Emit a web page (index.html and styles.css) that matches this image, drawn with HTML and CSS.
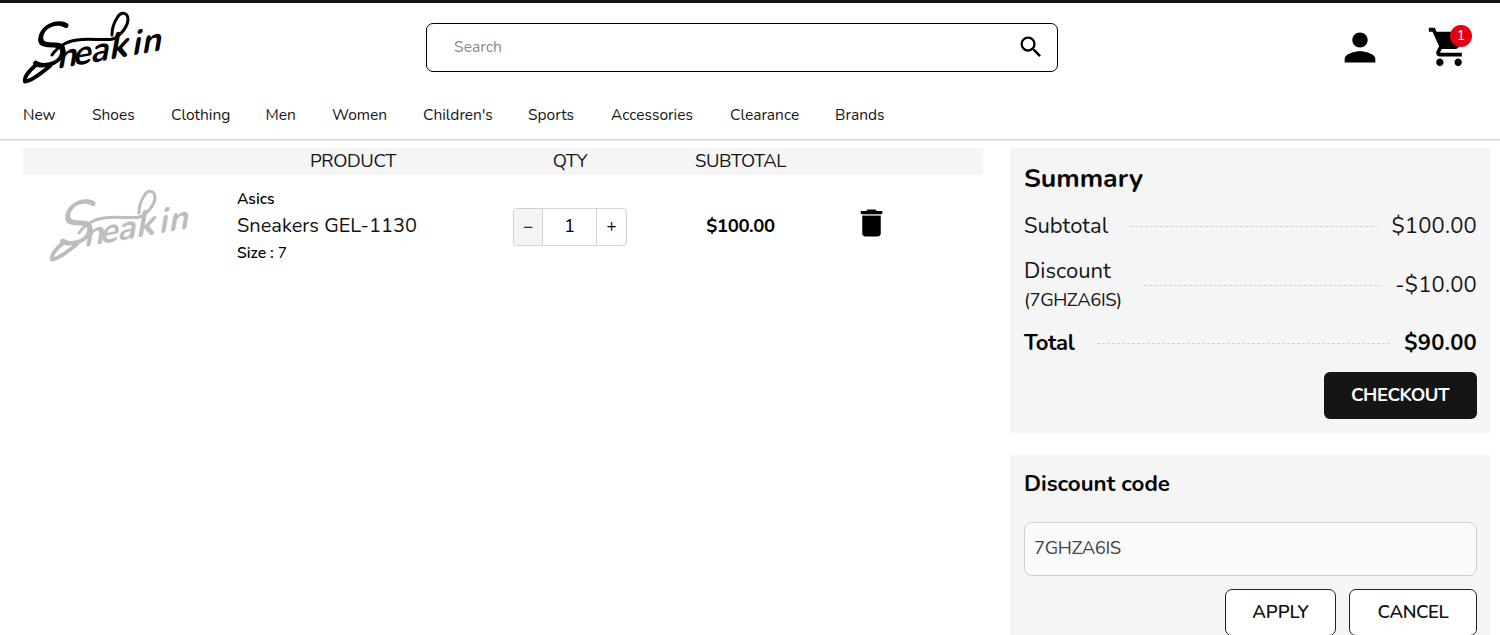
FILE: index.html
```html
<!DOCTYPE html>
<html lang="en">
<head>
<meta charset="utf-8">
<title>Sneakin – Cart</title>
<link rel="stylesheet" href="styles.css">
</head>
<body>
<svg class="defs" width="0" height="0" aria-hidden="true">
  <symbol id="wordmark" viewBox="0 0 144 76" overflow="visible">
    <g fill="none" stroke="currentColor" stroke-linecap="round" stroke-linejoin="round">
      <path stroke-width="3" d="M30 45C37 35 46 30 60 29.500C70 29 80 30 88 29.500C95 29 105 19 106 10C106 2 99 1 95 8C91 14 90 19 90 25"/>
      <path stroke-width="4" d="M28 56C22 61 9 71 3 71.500C2 67 8 60 14 55"/>
    </g>
    <g class="wordmark-letters" fill="currentColor" transform="translate(28 60) rotate(-10) skewX(-20)">
      <text><tspan class="wm-s" x="-22" y="-4">S</tspan><tspan class="wm-low" x="7 23 41" y="0">nea</tspan><tspan class="wm-k" x="60" y="0">k</tspan><tspan class="wm-low" x="83 93" y="0">in</tspan></text>
    </g>
  </symbol>
</svg>

<header class="header">
  <div class="topbar">
    <a class="logo"><svg width="144" height="76"><use href="#wordmark"/></svg></a>
    <div class="search">
      <span class="search-hint">Search</span>
      <svg width="28" height="28" viewBox="0 0 24 24"><path d="M15.500 14h-.79l-.28-.27A6.470 6.470 0 0 0 16 9.500 6.500 6.500 0 1 0 9.500 16c1.610 0 3.090-.59 4.230-1.570l.27.28v.79l5 4.990L20.490 19l-4.990-5zm-6 0C7.010 14 5 11.990 5 9.500S7.010 5 9.500 5 14 7.010 14 9.500 11.990 14 9.500 14z"/></svg>
    </div>
    <div class="account">
      <svg width="46" height="45" viewBox="0 0 24 24" preserveAspectRatio="none"><path d="M12 12c2.210 0 4-1.790 4-4s-1.790-4-4-4-4 1.790-4 4 1.790 4 4 4zm0 2c-2.670 0-8 1.340-8 4v2h16v-2c0-2.660-5.330-4-8-4z"/></svg>
      <div class="cart">
        <svg width="44" height="46" viewBox="0 0 24 24" preserveAspectRatio="none"><path d="M7 18c-1.100 0-1.990.9-1.990 2S5.900 22 7 22s2-.9 2-2-.9-2-2-2zM1 2v2h2l3.600 7.590-1.350 2.450c-.16.28-.25.61-.25.96 0 1.100.9 2 2 2h12v-2H7.420c-.14 0-.25-.11-.25-.25l.03-.12.9-1.630h7.450c.75 0 1.410-.41 1.750-1.030l3.580-6.490A1 1 0 0 0 20 4H5.210l-.94-2H1zm16 16c-1.100 0-1.990.9-1.990 2s.89 2 1.990 2 2-.9 2-2-.9-2-2-2z"/></svg>
        <span class="badge">1</span>
      </div>
    </div>
  </div>
  <nav class="nav">
    <a>New</a><a>Shoes</a><a>Clothing</a><a>Men</a><a>Women</a><a>Children's</a><a>Sports</a><a>Accessories</a><a>Clearance</a><a>Brands</a>
  </nav>
</header>

<main class="main">
  <section class="items">
    <div class="row head"><span></span><span>PRODUCT</span><span>QTY</span><span>SUBTOTAL</span></div>
    <div class="row item">
      <div class="thumb"><svg width="146" height="76"><use href="#wordmark"/></svg></div>
      <div class="product">
        <div class="brand">Asics</div>
        <div class="name">Sneakers GEL-1130</div>
        <div class="size"><b>Size :</b> 7</div>
      </div>
      <div class="cell"><div class="stepper"><span class="minus">−</span><span class="count">1</span><span>+</span></div></div>
      <div class="cell price">$100.00</div>
      <div class="cell trash"><svg width="37" height="36" viewBox="0 0 24 24" preserveAspectRatio="none"><path d="M6 19c0 1.100.9 2 2 2h8c1.100 0 2-.9 2-2V7H6v12zM19 4h-3.500l-1-1h-5l-1 1H5v2h14V4z"/><path fill="#aaa" d="M6 6h12v1H6z"/></svg></div>
    </div>
  </section>

  <aside class="side">
    <section class="card summary">
      <h2>Summary</h2>
      <div class="line"><span class="label">Subtotal</span><i></i><span class="amount">$100.00</span></div>
      <div class="line discount"><span class="label">Discount<small>(7GHZA6IS)</small></span><i></i><span class="amount">-$10.00</span></div>
      <div class="line total"><span class="label">Total</span><i></i><span class="amount">$90.00</span></div>
      <button class="checkout">CHECKOUT</button>
    </section>
    <section class="card code">
      <h3>Discount code</h3>
      <div class="field">7GHZA6IS</div>
      <div class="buttons"><button class="apply">APPLY</button><button class="cancel">CANCEL</button></div>
    </section>
  </aside>
</main>
</body>
</html>
```

FILE: styles.css
```css
* { box-sizing: border-box; }
body {
  margin: 0;
  height: 635px;
  overflow: hidden;
  background: #fff;
  color: #161616;
  font-family: Nunito, Lato, "Open Sans", sans-serif;
}
button { font-family: inherit; padding: 0; }
svg { overflow: visible; }
.defs { display: block; }
.wordmark-letters { font-weight: 700; }
.wm-s { font-size: 60px; font-weight: 400; }
.wm-low { font-size: 34px; }
.wm-k { font-size: 36px; }

.header { height: 141px; border-top: 3px solid #141414; border-bottom: 1px solid #eee; box-shadow: inset 0 -1px #d6d6d6; }
.topbar { height: 88px; padding: 7px 0 0 22px; display: grid; grid-template-columns: 404px 632px 1fr; }
.logo { display: block; color: #000; }
.search { margin-top: 13px; height: 49px; border: 1px solid #000; border-radius: 7px; display: flex; align-items: center; justify-content: space-between; padding: 0 12px 1px 27px; }
.search-hint { color: #8b8b8b; font-size: 15.700px; }
.account { display: flex; padding: 13px 0 0 279px; }
.account > svg { margin-top: 2px; }
.cart { position: relative; margin-left: 44px; height: 46px; }
.cart svg { display: block; margin-top: 1px; }
.badge { position: absolute; left: 23px; top: 2px; width: 22px; height: 22px; border-radius: 50%; background: #e3000f; color: #fff; font-size: 14px; line-height: 22px; text-align: center; }
.nav { padding-left: 23px; display: grid; grid-template-columns: 69px 79px 94.500px 66.500px 91px 105px 83px 119px 105px 60px; font-size: 15.500px; line-height: 48px; white-space: nowrap; }

.main { display: grid; grid-template-columns: 960px 480px; column-gap: 27px; padding: 7px 0 0 23px; }
.row { display: grid; grid-template-columns: 214px 232px 202px 139px 122px; }
.head { height: 27px; background: #f5f5f5; font-size: 18.500px; letter-spacing: -0.400px; line-height: 26px; text-align: center; }
.item { height: 102px; }
.thumb { padding: 13px 0 0 25px; color: #bdbdbd; }
.product { padding-top: 12px; color: #111; }
.brand, .size { font-size: 15.600px; line-height: 24px; color: #000; }
.brand { font-weight: 600; }
.name { font-size: 20px; line-height: 30px; white-space: nowrap; }
.size b { font-weight: 600; }
.cell { display: flex; align-items: center; justify-content: center; }
.stepper { width: 114px; height: 38px; margin-top: 1px; border: 1px solid #d3d3d3; border-radius: 4px; display: grid; grid-template-columns: 28px 55px 29px; text-align: center; line-height: 36px; font-size: 17px; color: #000; overflow: hidden; }
.minus { background: #f4f4f4; }
.count { border: solid #d3d3d3; border-width: 0 1px; font-size: 18.500px; line-height: 34px; }
.price { font-size: 18.500px; letter-spacing: -0.400px; font-weight: 700; color: #000; }
.trash { padding-bottom: 6px; }

.side { display: flex; flex-direction: column; gap: 22px; }
.card { background: #f5f5f5; padding: 0 13px 0 14px; }
.summary { height: 285px; }
h2, h3 { margin: 0; color: #050505; }
h2 { font-size: 26.700px; line-height: 38px; padding: 11px 0 2px; }
h3 { font-size: 22.300px; line-height: 32px; padding-top: 13px; }
.line { display: flex; align-items: center; font-size: 22px; line-height: 30px; }
.line i { flex: 1; height: 1px; margin: 1px 14px 0 22px; background: repeating-linear-gradient(90deg, #d0d0d0 0 3px, transparent 3px 5px); }
.line { margin-top: 12px; }
.amount { letter-spacing: 0.200px; }
.discount { margin-top: 15px; }
.discount small { display: block; font-size: 18.500px; letter-spacing: -0.400px; line-height: 28px; }
.total { margin-top: 14px; font-weight: 700; color: #050505; }
.total .label { letter-spacing: -0.300px; }
.checkout { display: block; margin: 14px 0 0 auto; width: 153px; height: 47px; padding: 0 1px 1px 0; border: 0; border-radius: 6px; background: #151515; color: #fff; font-size: 18.500px; letter-spacing: -0.500px; font-weight: 700; }
.code { height: 190px; }
.field { margin-top: 22px; height: 54px; border: 1px solid #d0d0d0; border-radius: 8px; background: #fafafa; padding-left: 9px; line-height: 51px; font-size: 18.500px; letter-spacing: -0.400px; color: #444; }
.buttons { display: flex; justify-content: flex-end; gap: 13px; margin-top: 13px; }
.buttons button { height: 47px; padding-bottom: 1px; border: 1px solid #222; border-radius: 7px; background: #fff; color: #111; font-size: 18.500px; letter-spacing: -0.400px; font-weight: 600; }
.buttons .apply { width: 111px; letter-spacing: 0; }
.cancel { width: 128px; }
```
